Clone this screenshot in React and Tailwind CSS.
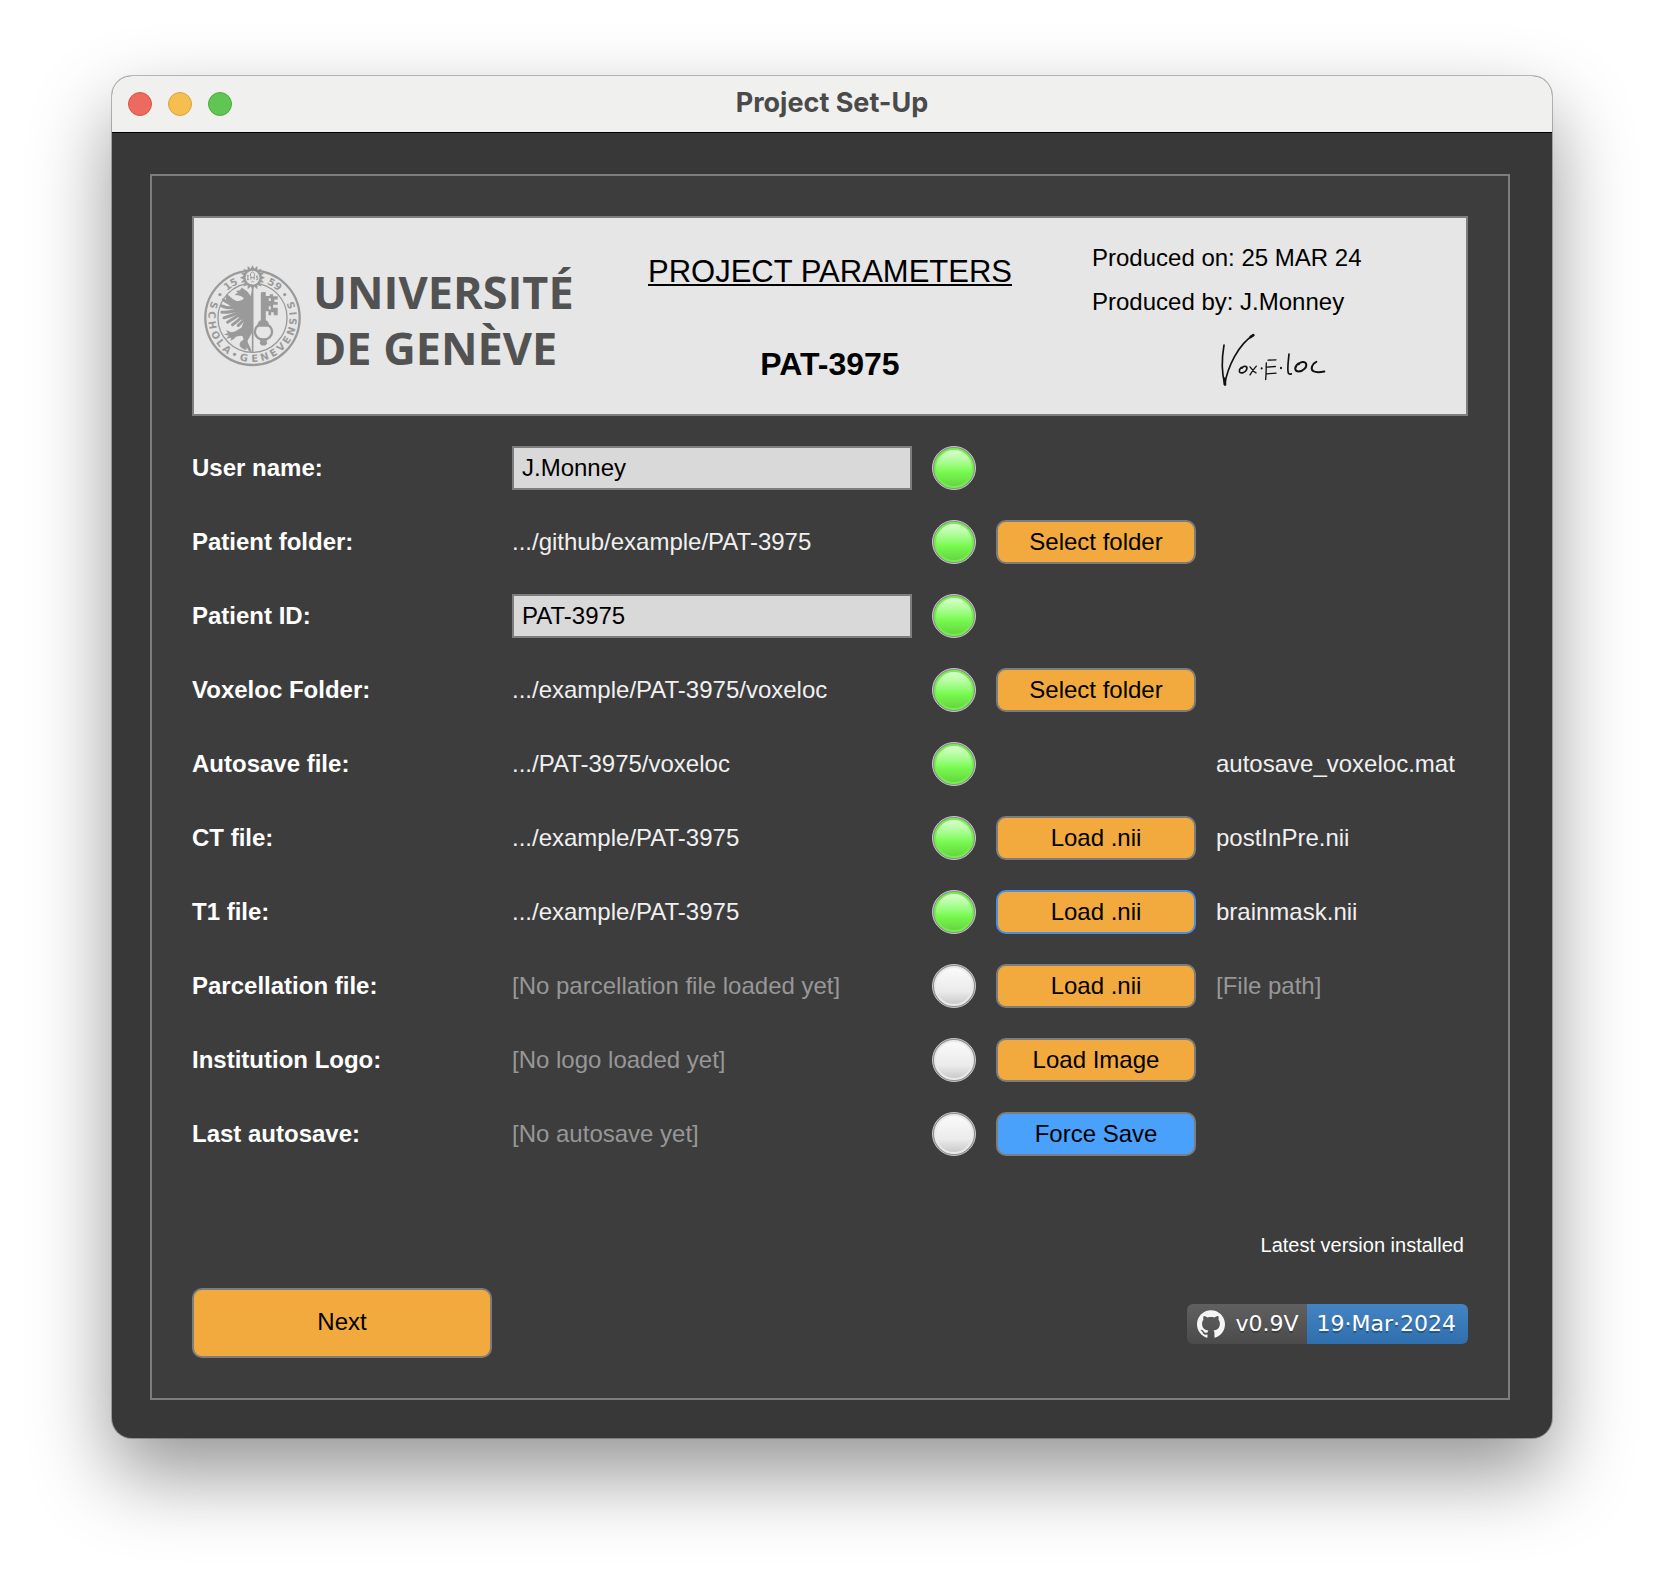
import React from "react";
import { SiGithub } from "react-icons/si";

const ROWS = [
  { id: "user", label: "User name:", input: "J.Monney", on: true },
  { id: "patient-folder", label: "Patient folder:", value: ".../github/example/PAT-3975", on: true, action: "Select folder" },
  { id: "patient-id", label: "Patient ID:", input: "PAT-3975", on: true },
  { id: "voxeloc-folder", label: "Voxeloc Folder:", value: ".../example/PAT-3975/voxeloc", on: true, action: "Select folder" },
  { id: "autosave-file", label: "Autosave file:", value: ".../PAT-3975/voxeloc", on: true, file: "autosave_voxeloc.mat" },
  { id: "ct", label: "CT file:", value: ".../example/PAT-3975", on: true, action: "Load .nii", file: "postInPre.nii" },
  { id: "t1", label: "T1 file:", value: ".../example/PAT-3975", on: true, action: "Load .nii", file: "brainmask.nii", focused: true },
  { id: "parcellation", label: "Parcellation file:", placeholder: "[No parcellation file loaded yet]", action: "Load .nii", filePlaceholder: "[File path]" },
  { id: "logo", label: "Institution Logo:", placeholder: "[No logo loaded yet]", action: "Load Image" },
  { id: "last", label: "Last autosave:", placeholder: "[No autosave yet]", action: "Force Save", primary: true },
];

const SEAL_BOTTOM = [
  ["S", -108], ["C", -94], ["H", -80], ["O", -65], ["L", -52], ["A", -39],
  ["G", -12], ["E", 3], ["N", 17], ["E", 31], ["V", 44], ["E", 57], ["N", 71], ["S", 85], ["I", 96], ["S", 108],
];
const SEAL_TOP = [["1", -38], ["5", -28], ["5", 28], ["9", 39]];

const SUN = Array.from({ length: 32 }, (_, i) => {
  const r = i % 2 ? 27 : 38;
  const a = (i * Math.PI) / 16;
  return `${(172 + r * Math.sin(a)).toFixed(1)},${(72 - r * Math.cos(a)).toFixed(1)}`;
}).join(" ");

function Seal() {
  return (
    <svg viewBox="26 32 292 308" className="h-[103px] w-[97px] shrink-0 text-[#9a9a9a]" fill="currentColor" aria-label="Seal">
      <circle cx="172" cy="193" r="142" fill="none" stroke="currentColor" strokeWidth="7" />
      <circle cx="172" cy="193" r="104" fill="none" stroke="currentColor" strokeWidth="4" />
      <g fontFamily='"DejaVu Sans", Verdana, sans-serif' fontWeight="700" fontSize="30" textAnchor="middle">
        {SEAL_BOTTOM.map(([c, a], i) => (
          <text key={i} transform={`translate(172 193) rotate(${-a}) translate(0 133)`}>{c}</text>
        ))}
        {SEAL_TOP.map(([c, a], i) => (
          <text key={i} transform={`translate(172 193) rotate(${a}) translate(0 -111)`}>{c}</text>
        ))}
      </g>
      <circle cx="74" cy="123" r="5" />
      <circle cx="269" cy="123" r="5" />
      <circle cx="118" cy="303" r="5" />

      {/* half eagle */}
      <path d="M171 108 L171 236 C168 246 160 256 157 263 C158 272 166 278 170 298 C163 295 158 290 155 282 L153 290 C146 288 136 284 133 276 C132 268 138 262 145 260 L143 250 C136 244 128 250 122 250 C118 258 112 258 106 262 L108 253 L92 256 L101 247 L86 243 L98 239 L92 230 L106 236 C118 238 128 228 139 222 L146 205 C138 198 130 190 124 176 L106 158 C94 150 88 138 94 122 C104 126 108 136 124 142 C132 144 142 140 146 134 C142 128 132 124 118 124 L128 117 L122 112 L134 110 L140 102 L148 108 C156 112 162 120 166 128 Z" />
      <g fill="none" stroke="currentColor" strokeWidth="9" strokeLinecap="round">
        <path d="M84 139 Q100 152 130 156" />
        <path d="M79 157 Q98 166 134 162" />
        <path d="M80 176 Q100 178 136 168" />
        <path d="M86 193 Q106 188 140 172" />
        <path d="M97 206 Q116 194 146 176" />
        <path d="M112 214 Q128 202 152 180" />
        <path d="M129 216 Q142 206 156 186" />
      </g>
      <rect x="170" y="104" width="5" height="194" />

      {/* key */}
      <path d="M197 117 L202 115 H212 V127 H224 V122 H234 V128 H248 V138 H238 V145 H248 V154 H234 V163 H248 V185 H236 V176 H228 V185 H220 V173 H212 V200 C218 202 223 208 222 220 H187 C186 208 191 202 197 200 Z" />
      <path d="M224 134 V142 M224 158 V168" stroke="#e6e6e6" strokeWidth="6" />
      <ellipse cx="205" cy="235" rx="26" ry="24" fill="none" stroke="currentColor" strokeWidth="7" />
      <path d="M192 255 H218 L214 264 L217 269 L211 276 H199 L193 269 L196 264 Z" />

      {/* sun */}
      <polygon points={SUN} />
      <circle cx="172" cy="72" r="21" fill="#e6e6e6" />
      <path d="M172 54 L178 60 V66 M172 54 L166 60 V66 M158 66 V78 M155 66 H161 M155 78 H161 M167 66 V78 M177 66 V78 M167 72 H177 M189 67 H184 V72 H188 V78 H183 M169 86 L172 82 L175 86" fill="none" stroke="currentColor" strokeWidth="3" />
    </svg>
  );
}

function Signature() {
  return (
    <svg viewBox="60 36 330 164" className="mt-2 h-[55px] w-[110px]" fill="none" stroke="#111" strokeLinecap="round" strokeLinejoin="round" aria-label="Signature">
      <path d="M75 75 C69 110 66 150 77 192" strokeWidth="5" />
      <path d="M77 193 C86 140 118 72 163 45" strokeWidth="5" />
      <path d="M77 176 L78 193 M155 50 L163 45" strokeWidth="8" />
      <path d="M127 142 C117 150 120 160 131 158 C142 155 147 143 141 139 C137 137 131 140 129 144" strokeWidth="5" />
      <path d="M153 140 C158 146 163 154 171 158 M172 138 C165 146 159 154 153 164" strokeWidth="4" />
      <path d="M188 144 L188 145 M246 143 L246 144" strokeWidth="6" />
      <path d="M202 128 C201 145 202 160 200 178 M207 120 L231 119 M203 141 L229 139 M203 161 L231 159" strokeWidth="4" />
      <path d="M270 102 C268 124 264 148 268 159 Q270 163 277 161" strokeWidth="5" />
      <path d="M298 130 C285 140 286 154 299 154 C314 153 325 140 321 130 C317 122 303 125 299 132" strokeWidth="6" />
      <path d="M352 125 C340 130 333 146 343 153 C352 158 366 156 376 154" strokeWidth="6" />
    </svg>
  );
}

function Lamp({ on }) {
  return (
    <span
      role="img"
      aria-label={on ? "Ready" : "Not set"}
      className="block size-11 rounded-full border border-[#c8c8c8] bg-[#8c8c8c] p-px"
    >
      <span
        className={
          on
            ? "block size-full rounded-full border-2 border-[#73ee4c] bg-linear-to-b from-[#d9fdcd] via-[#79fb4f] via-60% to-[#64d641]"
            : "block size-full rounded-full border-2 border-[#e9e9e9] bg-linear-to-b from-[#fafafa] via-[#ebebeb] via-65% to-[#cbcbcb]"
        }
      />
    </span>
  );
}

function Row({ row }) {
  const label = "font-bold text-white";
  return (
    <div className="grid h-11 grid-cols-[300px_minmax(0,400fr)_44px_200px_minmax(0,252fr)] items-center gap-5 whitespace-nowrap">
      {row.input ? (
        <label htmlFor={row.id} className={label}>{row.label}</label>
      ) : (
        <span className={label}>{row.label}</span>
      )}
      {row.input ? (
        <input
          id={row.id}
          type="text"
          defaultValue={row.input}
          className="h-11 w-full border-2 border-[#7d7d7d] bg-[#d9d9d9] px-2 text-black outline-none"
        />
      ) : row.value ? (
        <span className="text-[#f0f0f0]">{row.value}</span>
      ) : (
        <span className="text-[#979797]">{row.placeholder}</span>
      )}
      <Lamp on={row.on} />
      {row.action ? (
        <button
          type="button"
          className={
            "h-11 rounded-[10px] border-2 text-black " +
            (row.primary ? "bg-[#4aa1fc] " : "bg-[#f2aa3e] ") +
            (row.focused ? "border-[#4a8fe0]" : "border-[#7d7d7d]")
          }
        >
          {row.action}
        </button>
      ) : (
        <span />
      )}
      {row.file ? (
        <span className="text-[#f0f0f0]">{row.file}</span>
      ) : (
        <span className="text-[#979797]">{row.filePlaceholder}</span>
      )}
    </div>
  );
}

export default function App() {
  return (
    <div className="bg-white px-28 pt-[76px] pb-[148px] font-['Liberation_Sans',Arial,sans-serif] text-2xl">
      <main className="overflow-hidden rounded-[20px] bg-[#383838] shadow-[0_0_0_1px_rgba(0,0,0,0.25),0_36px_80px_rgba(0,0,0,0.42)]">
        <header className="grid h-14 grid-cols-[1fr_auto_1fr] items-center bg-[#f0f0ee] px-4">
          <div className="flex gap-4">
            <button type="button" aria-label="Close" className="size-6 rounded-full border border-[#d5554b] bg-[#ec6a5e]" />
            <button type="button" aria-label="Minimize" className="size-6 rounded-full border border-[#d9a23c] bg-[#f4bf4f]" />
            <button type="button" aria-label="Zoom" className="size-6 rounded-full border border-[#4fab40] bg-[#61c554]" />
          </div>
          <h1 className="pb-0.5 font-[Inter,sans-serif] text-[27px] leading-8 font-bold text-[#4a4a4a]">Project Set-Up</h1>
        </header>

        <div className="border-t border-black pt-[41px] pr-[42px] pb-[38px] pl-[38px]">
          <div className="border-2 border-[#7d7d7d] bg-[#3d3d3d] p-10">
            <section className="grid h-[200px] grid-cols-[364px_1fr_364px] border-2 border-[#7d7d7d] bg-[#e6e6e6] px-2.5 text-black">
              <div className="flex items-start gap-3 pt-[46px]">
                <Seal />
                <p className="font-['Open_Sans',sans-serif] text-[45px] leading-[56px] font-bold whitespace-nowrap text-[#525252]">
                  UNIVERSITÉ
                  <br />
                  DE GENÈVE
                </p>
              </div>
              <div className="pt-2 text-center leading-[92px]">
                <h2 className="text-[31px] underline decoration-2 underline-offset-2">PROJECT PARAMETERS</h2>
                <p className="text-[32px] font-bold">PAT-3975</p>
              </div>
              <div className="pt-[18px] leading-[44px]">
                <p>Produced on: 25 MAR 24</p>
                <p>Produced by: J.Monney</p>
                <div className="flex justify-center">
                  <Signature />
                </div>
              </div>
            </section>

            <form className="mt-[30px] flex flex-col gap-[30px]" onSubmit={(e) => e.preventDefault()}>
              {ROWS.map((row) => (
                <Row key={row.id} row={row} />
              ))}
            </form>

            <p className="mt-[74px] pr-1 text-right text-xl leading-[30px] text-white">Latest version installed</p>

            <footer className="mt-7 flex items-start justify-between">
              <button type="button" className="h-[70px] w-[300px] rounded-[10px] border-2 border-[#7d7d7d] bg-[#f2aa3e] pb-0.5 text-black">
                Next
              </button>
              <a
                href="#release"
                className="mt-4 flex h-10 overflow-hidden rounded-md font-['DejaVu_Sans',Verdana,sans-serif] text-[22px] leading-10 whitespace-nowrap text-white [text-shadow:0_2px_0_rgba(1,1,1,0.3)]"
              >
                <span className="flex items-center gap-2.5 bg-linear-to-b from-[#606060] to-[#4b4b4b] pr-2 pl-2.5">
                  <SiGithub className="size-7 text-[#f5f5f5]" />
                  v0.9V
                </span>
                <span className="bg-linear-to-b from-[#4484c3] to-[#306fae] pr-3 pl-2.5">19·Mar·2024</span>
              </a>
            </footer>
          </div>
        </div>
      </main>
    </div>
  );
}
